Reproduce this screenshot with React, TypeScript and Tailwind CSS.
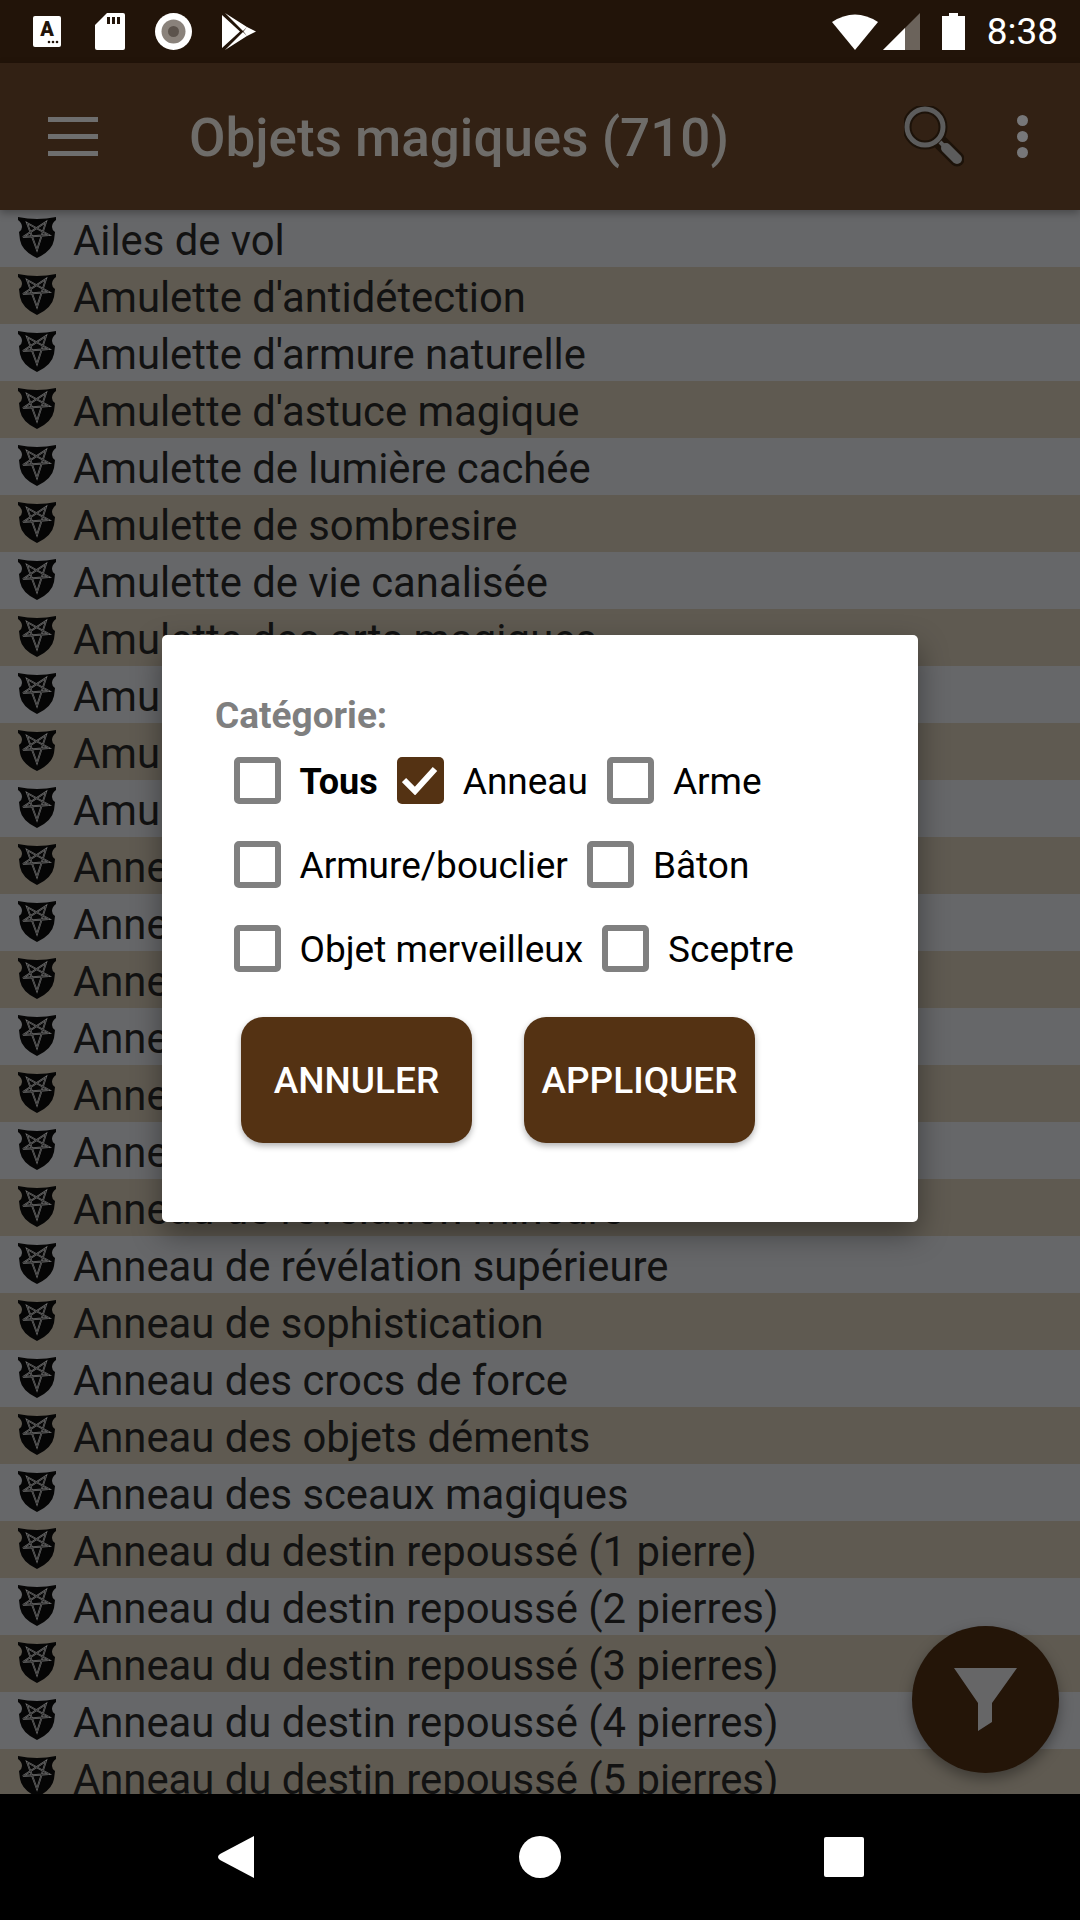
const items = [
  'Ailes de vol',
  "Amulette d'antidétection",
  "Amulette d'armure naturelle",
  "Amulette d'astuce magique",
  'Amulette de lumière cachée',
  'Amulette de sombresire',
  'Amulette de vie canalisée',
  'Amulette des arts magiques',
  'Amulette',
  'Amulette',
  'Amulette',
  'Anneau',
  'Anneau',
  'Anneau',
  'Anneau',
  'Anneau',
  'Anneau',
  'Anneau de révélation mineure',
  'Anneau de révélation supérieure',
  'Anneau de sophistication',
  'Anneau des crocs de force',
  'Anneau des objets déments',
  'Anneau des sceaux magiques',
  'Anneau du destin repoussé (1 pierre)',
  'Anneau du destin repoussé (2 pierres)',
  'Anneau du destin repoussé (3 pierres)',
  'Anneau du destin repoussé (4 pierres)',
  'Anneau du destin repoussé (5 pierres)',
];

const categories = [
  [
    { label: 'Tous', bold: true },
    { label: 'Anneau', checked: true },
    { label: 'Arme' },
  ],
  [{ label: 'Armure/bouclier' }, { label: 'Bâton' }],
  [{ label: 'Objet merveilleux' }, { label: 'Sceptre' }],
];

function ShieldIcon() {
  const star = '9,6 31,18 5,20 28,5 19,33';
  return (
    <svg width="38" height="41" viewBox="0 0 38 41" className="shrink-0">
      <path
        d="M0 0 Q19 4 38 0 L38 3 Q34 6 34 10 Q34 13 37 15 L36 23 Q34 34 19 41 Q4 34 2 23 L1 15 Q4 13 4 10 Q4 6 0 3 Z"
        fill="#050505"
      />
      <polygon points={star} fill="none" stroke="#707070" strokeWidth="1.800" strokeLinejoin="miter" />
      <polygon points={star} fill="none" stroke="#111" strokeWidth="0.500" strokeLinejoin="miter" />
    </svg>
  );
}

function StatusBar() {
  return (
    <div className="h-[63px] shrink-0 bg-[#221409] flex items-center justify-between pl-[33px] pr-[22px]">
      <div className="flex items-center gap-[30px]">
        <svg width="32" height="37" viewBox="0 0 32 37">
          <rect x="0" y="3" width="28" height="31" rx="2" fill="#fff" />
          <text x="14" y="23" textAnchor="middle" fontSize="20" fontWeight="900" fill="#221409">A</text>
          <circle cx="16" cy="29" r="1.300" fill="#221409" />
          <circle cx="20" cy="29" r="1.300" fill="#221409" />
          <circle cx="24" cy="29" r="1.300" fill="#221409" />
        </svg>
        <svg width="30" height="37" viewBox="0 0 30 37">
          <path d="M12 0 H28 Q30 0 30 2 V35 Q30 37 28 37 H2 Q0 37 0 35 V12 Z" fill="#fff" />
          <path d="M12 4 H15 V11 H12 Z M17 4 H20 V11 H17 Z M22 4 H25 V11 H22 Z" fill="#221409" />
        </svg>
        <svg width="37" height="37" viewBox="0 0 37 37">
          <circle cx="18.500" cy="18.500" r="18.500" fill="#fff" />
          <circle cx="18.500" cy="18.500" r="12" fill="#8a827b" />
          <circle cx="18.500" cy="18.500" r="5.500" fill="#5c534c" />
        </svg>
        <svg width="34" height="37" viewBox="0 0 34 37">
          <path d="M0 2 L18 18.500 L0 35 Z M3 0 L25 14 L21 18 Z M3 37 L25 23 L21 19 Z M25 14 L34 18.500 L25 23 L21.500 18.500 Z" fill="#fff" />
        </svg>
      </div>
      <div className="flex items-center">
        <svg width="46" height="37" viewBox="0 0 46 37">
          <path d="M0 9 Q23 -6 46 9 L23 37 Z" fill="#fff" />
        </svg>
        <svg width="37" height="37" viewBox="0 0 37 37" className="ml-[5px]">
          <path d="M0 37 L37 0 V37 Z" fill="#6b635b" />
          <path d="M0 37 L22 15 V37 Z" fill="#fff" />
        </svg>
        <svg width="23" height="37" viewBox="0 0 23 37" className="ml-[22px]">
          <path d="M7 0 H16 V3 H23 V37 H0 V3 H7 Z" fill="#fff" />
        </svg>
        <span className="ml-[22px] text-[37px] leading-none text-white">8:38</span>
      </div>
    </div>
  );
}

function Toolbar() {
  return (
    <div className="relative z-10 h-[147px] shrink-0 bg-[#322114] shadow-[0_3px_8px_rgba(0,0,0,0.3)] flex items-center pl-[48px] pr-[52px]">
      <div className="w-[50px] flex flex-col gap-[12px]">
        <div className="h-[5px] bg-[#6e6e6e]" />
        <div className="h-[5px] bg-[#6e6e6e]" />
        <div className="h-[5px] bg-[#6e6e6e]" />
      </div>
      <div className="ml-[91px] mt-[3px] flex-1 text-[53px] leading-[60px] font-medium text-[#6e6c69]">Objets magiques (710)</div>
      <svg width="60" height="62" viewBox="0 0 60 62" className="mr-[53px]">
        <circle cx="21" cy="21" r="18" fill="none" stroke="#1c1209" strokeWidth="9" />
        <path d="M37 37 L53 53" stroke="#1c1209" strokeWidth="15" strokeLinecap="round" />
        <circle cx="21" cy="21" r="18" fill="none" stroke="#5c5c5c" strokeWidth="5" />
        <path d="M36 36 L42 42" stroke="#5c5c5c" strokeWidth="4" />
        <path d="M42 42 L53 53" stroke="#5c5c5c" strokeWidth="10" strokeLinecap="round" />
      </svg>
      <div className="flex flex-col gap-[5px]">
        <div className="w-[11px] h-[11px] rounded-full bg-[#777779]" />
        <div className="w-[11px] h-[11px] rounded-full bg-[#777779]" />
        <div className="w-[11px] h-[11px] rounded-full bg-[#777779]" />
      </div>
    </div>
  );
}

function CheckBox({ label, checked, bold }: { label: string; checked?: boolean; bold?: boolean }) {
  return (
    <div className="flex items-center gap-[19px]">
      {checked ? (
        <div className="w-[47px] h-[47px] rounded-[5px] bg-[#543213] flex items-center justify-center">
          <svg width="36" height="28" viewBox="0 0 36 28">
            <path d="M2 13 L13 24 L33 2" fill="none" stroke="#fff" strokeWidth="6" />
          </svg>
        </div>
      ) : (
        <div className="w-[47px] h-[47px] rounded-[5px] border-[6px] border-[#808080]" />
      )}
      <span className={bold ? 'pt-[3px] text-[36px] leading-[44px] font-bold text-black' : 'pt-[3px] text-[37px] leading-[44px] text-black'}>{label}</span>
    </div>
  );
}

function FilterDialog() {
  return (
    <div className="absolute left-0 right-0 top-[63px] bottom-[126px] flex items-center justify-center z-20">
      <div className="w-[756px] h-[587px] bg-white rounded-[5px] shadow-[0_12px_30px_rgba(0,0,0,0.4)] pt-[61px] pl-[53px]">
        <div className="text-[37px] leading-[40px] font-bold text-[#7f7f7f]">Catégorie:</div>
        <div className="mt-[21px] pl-[18.500px] flex flex-col gap-[37px]">
          {categories.map((row, i) => (
            <div key={i} className="flex items-center gap-[19px]">
              {row.map((c) => (
                <CheckBox key={c.label} label={c.label} checked={c.checked} bold={c.bold} />
              ))}
            </div>
          ))}
        </div>
        <div className="mt-[45px] pl-[26px] flex gap-[52px]">
          <button className="w-[231px] h-[126px] pt-[2px] rounded-[22px] bg-[#543213] text-white text-[37px] font-medium shadow-[0_3px_6px_rgba(0,0,0,0.3)]">
            ANNULER
          </button>
          <button className="w-[231px] h-[126px] pt-[2px] rounded-[22px] bg-[#543213] text-white text-[37px] font-medium shadow-[0_3px_6px_rgba(0,0,0,0.3)]">
            APPLIQUER
          </button>
        </div>
      </div>
    </div>
  );
}

export default function App() {
  return (
    <div className="relative w-[1080px] h-[1920px] flex flex-col overflow-hidden bg-black font-['Roboto',sans-serif]">
      <StatusBar />
      <Toolbar />
      <div className="flex-1 overflow-hidden">
        {items.map((name, i) => (
          <div
            key={i}
            className={
              i % 2 === 0
                ? 'h-[57px] flex items-start gap-[17px] pl-[18px] pt-[7px] bg-[#666769]'
                : 'h-[57px] flex items-start gap-[17px] pl-[18px] pt-[7px] bg-[#5f5a51]'
            }
          >
            <ShieldIcon />
            <span className="text-[41.800px] leading-[48px] text-[#121212] whitespace-nowrap">{name}</span>
          </div>
        ))}
      </div>
      <div className="h-[126px] shrink-0 bg-black flex items-center">
        <svg width="1080" height="126" viewBox="0 0 1080 126">
          <path d="M254 42 V84 L220 66 Q216 63 220 60 Z" fill="#fff" />
          <circle cx="540" cy="63" r="21" fill="#fff" />
          <rect x="824" y="43" width="40" height="40" rx="2" fill="#fff" />
        </svg>
      </div>
      <FilterDialog />
      <div className="absolute left-[912px] top-[1626px] w-[147px] h-[147px] rounded-full bg-[#241508] shadow-[0_6px_14px_rgba(0,0,0,0.35)] flex items-center justify-center z-10">
        <svg width="63" height="63" viewBox="0 0 63 63">
          <path d="M0 0 H63 L38 35 V54 L24 63 V35 Z" fill="#666667" />
        </svg>
      </div>
    </div>
  );
}
